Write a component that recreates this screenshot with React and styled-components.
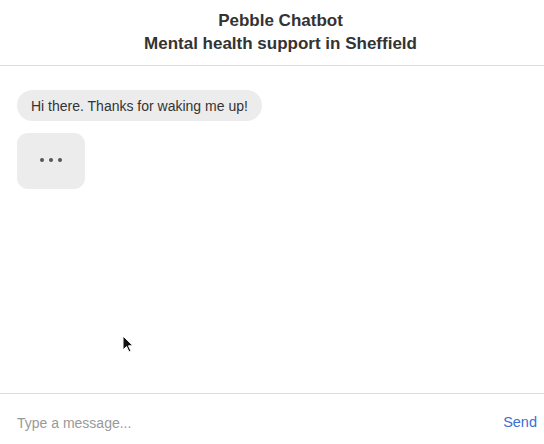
import React from "react";
import styled, { createGlobalStyle } from "styled-components";

const Global = createGlobalStyle`
  html, body { margin: 0; padding: 0; background: #fff; }
  body { font-family: "Liberation Sans", Arial, sans-serif; }
  * { box-sizing: border-box; }
`;

const Page = styled.div`
  position: relative;
  width: 544px;
  height: 444px;
  display: flex;
  flex-direction: column;
  background: #fff;
  overflow: hidden;
`;

const Header = styled.header`
  height: 66px;
  border-bottom: 1px solid #dcdcdc;
  display: flex;
  flex-direction: column;
  align-items: center;
  justify-content: center;
  padding: 0 0 2px 17px;
  color: #333;
  font-weight: bold;
  font-size: 17px;
  line-height: 23px;
`;

const Messages = styled.main`
  flex: 1;
  display: flex;
  flex-direction: column;
  align-items: flex-start;
  gap: 12px;
  padding: 24px 17px;
`;

const Bubble = styled.div`
  background: #ececec;
  color: #333;
  font-size: 14px;
  border-radius: ${(p) => (p.$typing ? "11px" : "16px")};
  height: ${(p) => (p.$typing ? "56px" : "31px")};
  width: ${(p) => (p.$typing ? "68px" : "auto")};
  padding: 0 14px;
  display: flex;
  align-items: center;
  justify-content: center;
`;

const Dots = styled.div`
  display: flex;
  gap: 5px;
  margin-top: -2px;
`;

const Dot = styled.span`
  width: 4px;
  height: 4px;
  border-radius: 50%;
  background: #555;
`;

const Footer = styled.footer`
  height: 51px;
  border-top: 1px solid #dcdcdc;
  display: flex;
  align-items: center;
  justify-content: space-between;
  padding: 8px 7px 0 17px;
`;

const Input = styled.input`
  flex: 1;
  border: none;
  outline: none;
  background: transparent;
  font-family: "Liberation Sans", Arial, sans-serif;
  font-size: 14px;
  color: #333;
  padding: 0;
  &::placeholder { color: #999; }
`;

const Send = styled.button`
  border: none;
  background: transparent;
  padding: 0;
  font-family: "Liberation Sans", Arial, sans-serif;
  font-size: 14.5px;
  color: #3a6fd3;
  margin-top: -3px;
`;

const Cursor = styled.svg`
  position: absolute;
  left: 122px;
  top: 335px;
`;

export default function App() {
  return (
    <Page>
      <Global />
      <Header>
        <div>Pebble Chatbot</div>
        <div>Mental health support in Sheffield</div>
      </Header>
      <Messages>
        <Bubble>Hi there. Thanks for waking me up!</Bubble>
        <Bubble $typing>
          <Dots>
            <Dot />
            <Dot />
            <Dot />
          </Dots>
        </Bubble>
      </Messages>
      <Footer>
        <Input placeholder="Type a message..." />
        <Send>Send</Send>
      </Footer>
      <Cursor width="14" height="20" viewBox="0 0 14 20">
        <path d="M1 1 L1 15 L4.5 11.5 L7 17 L9 16 L6.5 10.8 L11 10.8 Z" fill="#111" stroke="#fff" strokeWidth="1" />
      </Cursor>
    </Page>
  );
}
